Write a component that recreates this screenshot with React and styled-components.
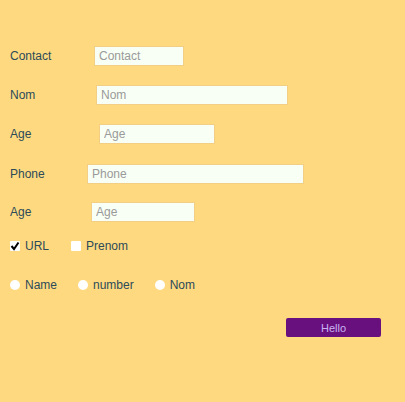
import React from 'react';
import styled, { createGlobalStyle } from 'styled-components';

const GlobalStyle = createGlobalStyle`
  html, body {
    margin: 0;
    padding: 0;
    background: #ffd980;
  }
  body {
    font-family: 'Liberation Sans', Arial, sans-serif;
  }
`;

const Page = styled.div`
  width: 405px;
  height: 402px;
  background: #ffd980;
  box-sizing: border-box;
  padding: 46px 0 0 10px;
  display: flex;
  flex-direction: column;
  color: #2c4b58;
  font-size: 12px;
`;

const Row = styled.div`
  display: flex;
  align-items: center;
  height: 20px;
  margin-bottom: ${(props) => props.gap}px;
`;

const Label = styled.span`
  display: inline-block;
  width: ${(props) => props.offset - 10}px;
  flex-shrink: 0;
`;

const Input = styled.input`
  box-sizing: border-box;
  width: ${(props) => props.w}px;
  height: 20px;
  margin: 0;
  padding: 0 4px;
  border: 1px solid #f3cf86;
  background: #f8fff4;
  font-family: 'Liberation Sans', Arial, sans-serif;
  font-size: 12px;
  color: #333;
  outline: none;
  &::placeholder {
    color: #9a9a9a;
  }
`;

const Choices = styled.div`
  display: flex;
  align-items: center;
  height: 16px;
  margin-bottom: ${(props) => props.gap}px;
`;

const Choice = styled.label`
  display: flex;
  align-items: center;
  gap: 5px;
  margin-right: ${(props) => props.space}px;
`;

const Box = styled.span`
  width: 10px;
  height: 10px;
  background: #fff;
  border-radius: ${(props) => (props.round ? '50%' : '1px')};
  display: flex;
  align-items: center;
  justify-content: center;
`;

const Footer = styled.div`
  display: flex;
  justify-content: flex-end;
  padding-right: 24px;
`;

const Button = styled.button`
  width: 95px;
  height: 19px;
  border: none;
  border-radius: 2px;
  background: #69107f;
  color: #c9b3f2;
  font-family: 'Liberation Sans', Arial, sans-serif;
  font-size: 11px;
  padding: 0;
`;

const Check = () => (
  <svg width="10" height="10" viewBox="0 0 10 10">
    <path d="M1.5 5 L4 8 L8.5 1.5" fill="none" stroke="#000" strokeWidth="2" />
  </svg>
);

const fields = [
  { label: 'Contact', offset: 94, w: 90, gap: 19 },
  { label: 'Nom', offset: 96, w: 192, gap: 19 },
  { label: 'Age', offset: 99, w: 116, gap: 20 },
  { label: 'Phone', offset: 87, w: 217, gap: 18 },
  { label: 'Age', offset: 91, w: 104, gap: 16 },
];

export default function App() {
  return (
    <>
      <GlobalStyle />
      <Page>
        {fields.map((f, i) => (
          <Row key={i} gap={f.gap}>
            <Label offset={f.offset}>{f.label}</Label>
            <Input w={f.w} placeholder={f.label} />
          </Row>
        ))}
        <Choices gap={23}>
          <Choice space={22}>
            <Box>
              <Check />
            </Box>
            URL
          </Choice>
          <Choice space={0}>
            <Box />
            Prenom
          </Choice>
        </Choices>
        <Choices gap={25}>
          <Choice space={21}>
            <Box round />
            Name
          </Choice>
          <Choice space={21}>
            <Box round />
            number
          </Choice>
          <Choice space={0}>
            <Box round />
            Nom
          </Choice>
        </Choices>
        <Footer>
          <Button>Hello</Button>
        </Footer>
      </Page>
    </>
  );
}
